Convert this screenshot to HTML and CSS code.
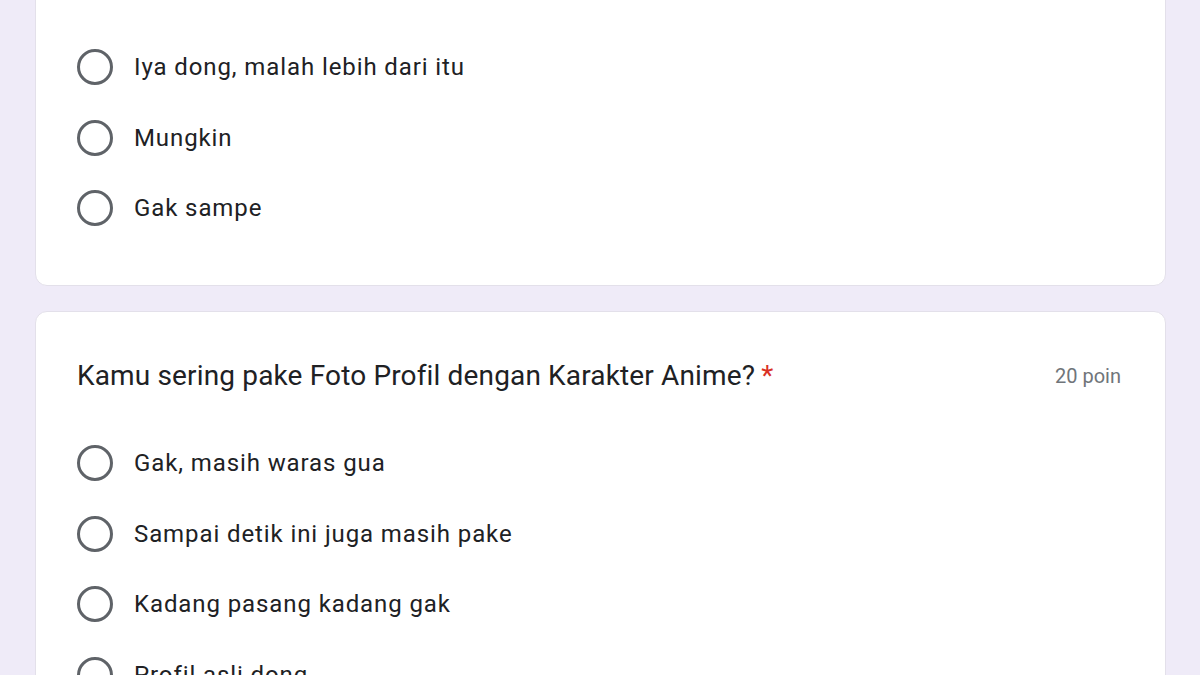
FILE: index.html
```html
<!DOCTYPE html>
<html lang="id">
<head>
<meta charset="utf-8">
<title>Form</title>
<link rel="stylesheet" href="styles.css">
</head>
<body>
<div class="page">
  <div class="card card-first">
    <div class="options">
      <div class="option"><span class="radio"></span><span class="label">Iya dong, malah lebih dari itu</span></div>
      <div class="option"><span class="radio"></span><span class="label">Mungkin</span></div>
      <div class="option"><span class="radio"></span><span class="label">Gak sampe</span></div>
    </div>
  </div>
  <div class="card card-second">
    <div class="question">
      <div class="title">Kamu sering pake Foto Profil dengan Karakter Anime?<span class="req">*</span></div>
      <div class="points">20 poin</div>
    </div>
    <div class="options">
      <div class="option"><span class="radio"></span><span class="label">Gak, masih waras gua</span></div>
      <div class="option"><span class="radio"></span><span class="label">Sampai detik ini juga masih pake</span></div>
      <div class="option"><span class="radio"></span><span class="label">Kadang pasang kadang gak</span></div>
      <div class="option"><span class="radio"></span><span class="label">Profil asli dong</span></div>
    </div>
  </div>
</div>
</body>
</html>
```

FILE: styles.css
```css
html, body {
  margin: 0;
  padding: 0;
  background: #efebf8;
  height: 675px;
  overflow: hidden;
}
body {
  font-family: Roboto, "Liberation Sans", Arial, sans-serif;
  color: #202124;
}
.page {
  width: 1131px;
  margin: -40px 0 0 35px;
  display: flex;
  flex-direction: column;
  gap: 25px;
}
.card {
  background: #fff;
  border: 1px solid #e3e0ea;
  border-radius: 12px;
  box-sizing: border-box;
}
.card-first {
  padding: 70.5px 44px 41px 41px;
}
.card-second {
  padding: 46px 44px 40px 41px;
}
.options {
  display: flex;
  flex-direction: column;
}
.option {
  height: 70.7px;
  display: flex;
  align-items: center;
  gap: 21px;
}
.radio {
  width: 36px;
  height: 36px;
  box-sizing: border-box;
  border: 3px solid #5f6368;
  border-radius: 50%;
  flex: none;
}
.label {
  font-size: 24px;
  letter-spacing: 0.9px;
  color: #202124;
}
.question {
  display: flex;
  justify-content: space-between;
  align-items: center;
  height: 36px;
  margin-bottom: 34px;
}
.title {
  font-size: 28px;
  line-height: 36px;
  letter-spacing: 0.15px;
  color: #202124;
}
.req {
  color: #d93025;
  margin-left: 6px;
}
.points {
  font-size: 20px;
  color: #70757a;
}
```
